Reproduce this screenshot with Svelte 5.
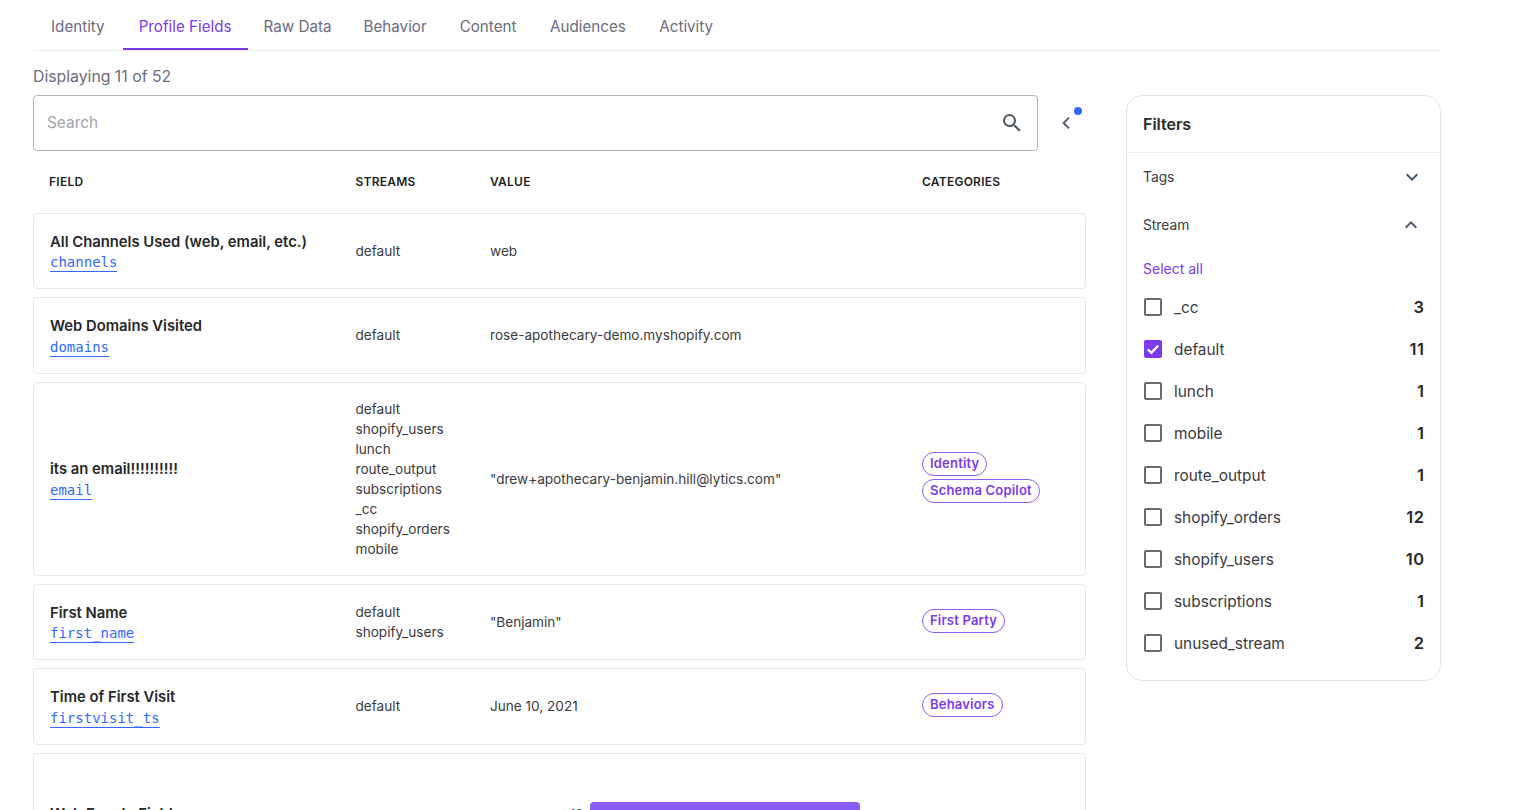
<script>
  const tabs = ['Identity', 'Profile Fields', 'Raw Data', 'Behavior', 'Content', 'Audiences', 'Activity'];
  const rows = [
    { name: 'All Channels Used (web, email, etc.)', key: 'channels', streams: ['default'], value: 'web', tags: [], cls: 'short' },
    { name: 'Web Domains Visited', key: 'domains', streams: ['default'], value: 'rose-apothecary-demo.myshopify.com', tags: [], cls: 'short' },
    { name: 'its an email!!!!!!!!!!', key: 'email', streams: ['default', 'shopify_users', 'lunch', 'route_output', 'subscriptions', '_cc', 'shopify_orders', 'mobile'], value: '"drew+apothecary-benjamin.hill@lytics.com"', tags: ['Identity', 'Schema Copilot'], cls: 'tall' },
    { name: 'First Name', key: 'first_name', streams: ['default', 'shopify_users'], value: '"Benjamin"', tags: ['First Party'], cls: 'short' },
    { name: 'Time of First Visit', key: 'firstvisit_ts', streams: ['default'], value: 'June 10, 2021', tags: ['Behaviors'], cls: 'short' }
  ];
  const filters = [
    ['_cc', 3, false], ['default', 11, true], ['lunch', 1, false], ['mobile', 1, false], ['route_output', 1, false],
    ['shopify_orders', 12, false], ['shopify_users', 10, false], ['subscriptions', 1, false], ['unused_stream', 2, false]
  ];
</script>

<div class="page">
  <nav class="tabs">
    {#each tabs as t, i}
      <span class="tab" class:active={i === 1}>{t}</span>
    {/each}
  </nav>
  <div class="count">Displaying 11 of 52</div>
  <div class="body">
    <main class="left">
      <div class="searchrow">
        <div class="search">
          <span class="ph">Search</span>
          <svg width="24" height="24" viewBox="0 0 24 24" fill="#4b5563"><path d="M15.5 14h-.79l-.28-.27A6.47 6.47 0 0 0 16 9.5 6.5 6.5 0 1 0 9.5 16c1.61 0 3.09-.59 4.23-1.57l.27.28v.79l5 4.99L20.49 19l-4.99-5zm-6 0C7.01 14 5 11.99 5 9.5S7.01 5 9.5 5 14 7.01 14 9.5 11.99 14 9.5 14z"/></svg>
        </div>
        <div class="collapse">
          <svg width="12" height="14" viewBox="0 0 12 14" fill="none" stroke="#5b5b73" stroke-width="2"><path d="M9 1.6 3.6 7l5.4 5.4"/></svg>
          <span class="dot"></span>
        </div>
      </div>
      <div class="head">
        <div class="c1">FIELD</div>
        <div class="c2">STREAMS</div>
        <div class="c3">VALUE</div>
        <div class="c4">CATEGORIES</div>
      </div>
      <div class="rows">
        {#each rows as r}
          <div class="row {r.cls}">
            <div class="c1 field">
              <div class="name">{r.name}</div>
              <span class="key">{r.key}</span>
            </div>
            <div class="c2 streams">
              {#each r.streams as s}<div>{s}</div>{/each}
            </div>
            <div class="c3 val">{r.value}</div>
            <div class="c4 tags">
              {#each r.tags as t}<span class="tag">{t}</span>{/each}
            </div>
          </div>
        {/each}
        <div class="row last">
          <div class="c1 field cut"><div class="name">Web Events Field</div></div>
          <div class="c2b"></div>
          <div class="barcell"><span class="num">12</span><span class="bar"></span></div>
        </div>
      </div>
    </main>
    <aside class="filters">
      <h2>Filters</h2>
      <div class="fbody">
        <div class="acc">
          <span>Tags</span>
          <svg width="24" height="24" viewBox="0 0 24 24" fill="#4b5a6b"><path d="M7.41 8.59 12 13.17l4.59-4.58L18 10l-6 6-6-6z"/></svg>
        </div>
        <div class="acc second">
          <span>Stream</span>
          <svg width="24" height="24" viewBox="0 0 24 24" fill="#4b5a6b"><path d="M7.41 15.41 12 10.83l4.59 4.58L18 14l-6-6-6 6z"/></svg>
        </div>
        <div class="selall">Select all</div>
        <ul>
          {#each filters as [n, c, on]}
            <li>
              <span class="box" class:on>
                {#if on}
                  <svg width="18" height="18" viewBox="0 0 18 18" fill="none" stroke="#fff" stroke-width="2.2"><path d="M3.8 9.2 7.4 12.8 14.2 5.6"/></svg>
                {/if}
              </span>
              <span class="lab">{n}</span>
              <b>{c}</b>
            </li>
          {/each}
        </ul>
      </div>
    </aside>
  </div>
</div>

<style>
  :global(body) {
    margin: 0;
    background: #fff;
    overflow: hidden;
  }
  .page {
    width: 1408px;
    margin-left: 33px;
    height: 810px;
    overflow: hidden;
    font-family: Inter, "Liberation Sans", sans-serif;
    color: #27272a;
  }
  .tabs {
    display: flex;
    height: 50px;
    padding-left: 2px;
    border-bottom: 1px solid #ececf0;
  }
  .tab {
    box-sizing: border-box;
    height: 50px;
    padding: 17px 16px 0;
    font-size: 15.2px;
    line-height: 20px;
    color: #6b6b80;
  }
  .tab.active {
    margin-left: 2px;
    color: #7c3aed;
    border-bottom: 2px solid #7c3aed;
  }
  .tab:nth-child(5) { margin-left: 1px; }
  .tab:nth-child(6) { margin-left: 1.5px; }
  .tab:nth-child(7) { margin-left: 1.5px; }
  .count {
    margin-top: 16px;
    font-size: 15.8px;
    line-height: 20px;
    color: #6b6b80;
  }
  .body {
    display: flex;
    justify-content: space-between;
    margin-top: 8px;
  }
  .left { width: 1053px; }
  .searchrow { display: flex; align-items: stretch; }
  .search {
    width: 1005px;
    height: 56px;
    box-sizing: border-box;
    border: 1px solid #b4b4b8;
    border-radius: 4px;
    display: flex;
    align-items: center;
    justify-content: space-between;
    padding: 0 13px;
  }
  .ph { font-size: 15.4px; line-height: 18px; color: #a3a3a8; }
  .collapse {
    position: relative;
    width: 48px;
    display: flex;
    align-items: center;
    padding-left: 22px;
    box-sizing: border-box;
  }
  .dot {
    position: absolute;
    width: 8px;
    height: 8px;
    border-radius: 50%;
    background: #2f6bff;
    left: 36px;
    top: 12px;
  }
  .head {
    display: flex;
    height: 61.8px;
    box-sizing: border-box;
    padding-bottom: 0.4px;
    align-items: center;
    font-size: 12px;
    font-weight: 600;
    letter-spacing: 0.25px;
    color: #1f1f23;
  }
  .head .c1 { padding-left: 16px; width: 322.5px; }
  .c1 { width: 321.5px; box-sizing: border-box; }
  .c2 { width: 134.5px; box-sizing: border-box; }
  .c3 { width: 432px; box-sizing: border-box; }
  .c4 { flex: 1; }
  .rows { display: flex; flex-direction: column; gap: 8px; }
  .row {
    display: flex;
    align-items: center;
    box-sizing: border-box;
    border: 1px solid #e7e7ea;
    border-radius: 4px;
    font-size: 13.6px;
    line-height: 20px;
    color: #3a3a40;
  }
  .short { height: 76.5px; }
  .tall { height: 194px; }
  .streams, .val { margin-bottom: 0.4px; }
  .field { padding-left: 16px; padding-top: 1.5px; }
  .name {
    font-size: 14.8px;
    font-weight: 600;
    line-height: 20px;
    color: #27272a;
  }
  .key {
    font-family: "DejaVu Sans Mono", monospace;
    font-size: 14px;
    line-height: 18px;
    color: #2f6bff;
    border-bottom: 1px solid #2f6bff;
    display: inline-block;
    margin-top: 1.5px;
  }
  .tags {
    display: flex;
    flex-direction: column;
    align-items: flex-start;
    gap: 3px;
    padding-bottom: 3px;
  }
  .tag {
    box-sizing: border-box;
    height: 24px;
    line-height: 21px;
    border: 1px solid #8b5cf6;
    border-radius: 12px;
    padding: 0 7px;
    font-size: 13px;
    font-weight: 600;
    letter-spacing: 0.2px;
    color: #7c3aed;
  }
  .last {
    height: 140px;
    align-items: flex-start;
    position: relative;
  }
  .cut { padding-top: 50px; padding-left: 16px; }
  .c2b { width: 215px; }
  .barcell {
    display: flex;
    align-items: flex-start;
    padding-top: 48px;
    gap: 0;
  }
  .num { font-size: 12px; width: 19px; padding-top: 5px; line-height: 14px; text-align: left; }
  .bar {
    width: 270px;
    height: 40px;
    background: #8b5cf6;
    border-radius: 4px;
  }
  .filters {
    width: 315px;
    height: 586px;
    box-sizing: border-box;
    border: 1px solid #e4e4ea;
    border-radius: 16px;
  }
  h2 {
    margin: 0;
    height: 57px;
    box-sizing: border-box;
    border-bottom: 1px solid #ececf0;
    padding: 18px 16px 0;
    font-size: 16px;
    line-height: 20px;
    font-weight: 600;
    color: #27272a;
  }
  .fbody { padding: 0 16px; }
  .acc {
    display: flex;
    align-items: center;
    justify-content: space-between;
    height: 48px;
    font-size: 13.8px;
    color: #3a3a40;
  }
  .acc span { margin-top: -1px; }
  .acc.second svg { margin-right: 1px; }
  .selall {
    margin-top: 10px;
    font-size: 14px;
    line-height: 20px;
    color: #7c3aed;
  }
  ul { list-style: none; margin: 7px 0 0; padding: 0; }
  li {
    display: flex;
    align-items: center;
    height: 42px;
    font-size: 15.4px;
    color: #3a3a40;
  }
  .box {
    width: 18px;
    height: 18px;
    box-sizing: border-box;
    border: 2px solid #6b6b6f;
    border-radius: 2px;
    margin: 0 12px 0 1px;
    display: flex;
    align-items: center;
    justify-content: center;
  }
  .box.on {
    background: #7c3aed;
    border-color: #7c3aed;
  }
  .box svg { flex: none; }
  .lab { flex: 1; }
  li b { font-size: 16.4px; font-weight: 600; color: #27272a; letter-spacing: 0.6px; margin-right: -0.6px; }
</style>
